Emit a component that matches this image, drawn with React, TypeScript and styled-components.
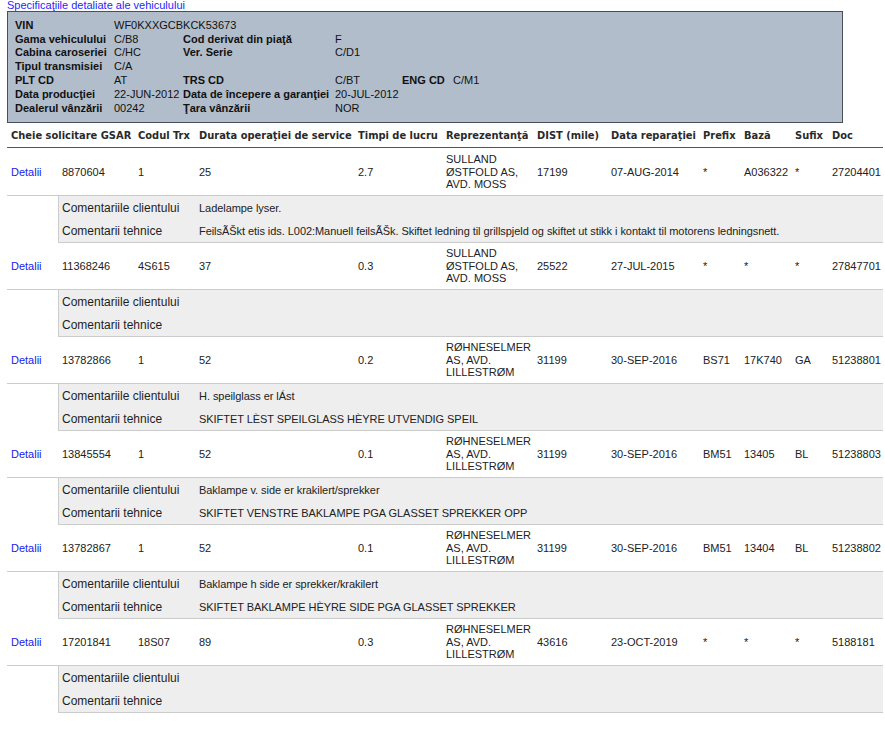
import styled, { createGlobalStyle } from 'styled-components';

const GlobalStyle = createGlobalStyle`
  body {
    margin: 0;
    background: #ffffff;
    font-family: "Liberation Sans", Arial, sans-serif;
    font-size: 11px;
    color: #222222;
  }
`;

type Record = {
  key: string;
  trx: string;
  duration: string;
  time: string;
  dealer: string;
  dist: string;
  date: string;
  prefix: string;
  base: string;
  suffix: string;
  doc: string;
  customer: string;
  tech: string;
};

const specRows: string[][] = [
  ['VIN', 'WF0KXXGCBKCK53673'],
  ['Gama vehiculului', 'C/B8', 'Cod derivat din piaţă', 'F'],
  ['Cabina caroseriei', 'C/HC', 'Ver. Serie', 'C/D1'],
  ['Tipul transmisiei', 'C/A'],
  ['PLT CD', 'AT', 'TRS CD', 'C/BT', 'ENG CD', 'C/M1'],
  ['Data producţiei', '22-JUN-2012', 'Data de începere a garanţiei', '20-JUL-2012'],
  ['Dealerul vânzării', '00242', 'Ţara vânzării', 'NOR'],
];

const headers = [
  'Codul Trx',
  'Durata operaţiei de service',
  'Timpi de lucru',
  'Reprezentanţă',
  'DIST (mile)',
  'Data reparaţiei',
  'Prefix',
  'Bază',
  'Sufix',
  'Doc',
];

const sulland = 'SULLAND ØSTFOLD AS, AVD. MOSS';
const rohne = 'RØHNESELMER AS, AVD. LILLESTRØM';

const records: Record[] = [
  {
    key: '8870604', trx: '1', duration: '25', time: '2.7', dealer: sulland, dist: '17199',
    date: '07-AUG-2014', prefix: '*', base: 'A036322', suffix: '*', doc: '27204401',
    customer: 'Ladelampe lyser.',
    tech: 'FeilsÃŠkt etis ids. L002:Manuell feilsÃŠk. Skiftet ledning til grillspjeld og skiftet ut stikk i kontakt til motorens ledningsnett.',
  },
  {
    key: '11368246', trx: '4S615', duration: '37', time: '0.3', dealer: sulland, dist: '25522',
    date: '27-JUL-2015', prefix: '*', base: '*', suffix: '*', doc: '27847701',
    customer: '', tech: '',
  },
  {
    key: '13782866', trx: '1', duration: '52', time: '0.2', dealer: rohne, dist: '31199',
    date: '30-SEP-2016', prefix: 'BS71', base: '17K740', suffix: 'GA', doc: '51238801',
    customer: 'H. speilglass er lÁst',
    tech: 'SKIFTET LÈST SPEILGLASS HÈYRE UTVENDIG SPEIL',
  },
  {
    key: '13845554', trx: '1', duration: '52', time: '0.1', dealer: rohne, dist: '31199',
    date: '30-SEP-2016', prefix: 'BM51', base: '13405', suffix: 'BL', doc: '51238803',
    customer: 'Baklampe v. side er krakilert/sprekker',
    tech: 'SKIFTET VENSTRE BAKLAMPE PGA GLASSET SPREKKER OPP',
  },
  {
    key: '13782867', trx: '1', duration: '52', time: '0.1', dealer: rohne, dist: '31199',
    date: '30-SEP-2016', prefix: 'BM51', base: '13404', suffix: 'BL', doc: '51238802',
    customer: 'Baklampe h side er sprekker/krakilert',
    tech: 'SKIFTET BAKLAMPE HÈYRE SIDE PGA GLASSET SPREKKER',
  },
  {
    key: '17201841', trx: '18S07', duration: '89', time: '0.3', dealer: rohne, dist: '43616',
    date: '23-OCT-2019', prefix: '*', base: '*', suffix: '*', doc: '5188181',
    customer: '', tech: '',
  },
];

// column widths of the history table
const COLUMNS = '51px 76px 61px 159px 88px 91px 74px 92px 41px 51px 37px 55px';

export default function App() {
  return (
    <>
      <GlobalStyle />
      <Page>
        <Title>Specificaţiile detaliate ale vehiculului</Title>
        <SpecBox>
          <SpecGrid>
            {specRows.map((row, r) =>
              [0, 1, 2, 3, 4, 5].map((c) => (
                <SpecCell key={`${r}-${c}`} $label={c % 2 === 0}>
                  {row[c] ?? ''}
                </SpecCell>
              ))
            )}
          </SpecGrid>
        </SpecBox>

        <HeaderRow>
          <HeadCell $span={2}>Cheie solicitare GSAR</HeadCell>
          {headers.map((h) => (
            <HeadCell key={h}>{h}</HeadCell>
          ))}
        </HeaderRow>

        {records.map((rec) => (
          <div key={rec.key}>
            <DataRow>
              <Cell>
                <DetailLink href="#">Detalii</DetailLink>
              </Cell>
              <Cell>{rec.key}</Cell>
              <Cell>{rec.trx}</Cell>
              <Cell>{rec.duration}</Cell>
              <Cell>{rec.time}</Cell>
              <DealerCell>{rec.dealer}</DealerCell>
              <Cell>{rec.dist}</Cell>
              <Cell>{rec.date}</Cell>
              <Cell>{rec.prefix}</Cell>
              <Cell>{rec.base}</Cell>
              <Cell>{rec.suffix}</Cell>
              <Cell>{rec.doc}</Cell>
            </DataRow>
            <CommentBlock>
              <CommentLine>
                <CommentLabel>Comentariile clientului</CommentLabel>
                <CommentText>{rec.customer}</CommentText>
              </CommentLine>
              <CommentLine>
                <CommentLabel>Comentarii tehnice</CommentLabel>
                <CommentText>{rec.tech}</CommentText>
              </CommentLine>
            </CommentBlock>
          </div>
        ))}
      </Page>
    </>
  );
}

const Page = styled.div`
  padding: 0 2px 0 7px;
`;

const Title = styled.div`
  color: #1f1fff;
  font-size: 11px;
  line-height: 11px;
  height: 11px;
`;

// VEHICLE SPEC BOX
const SpecBox = styled.div`
  box-sizing: border-box;
  width: 836px;
  height: 112px;
  padding: 6px 7px;
  background: #b1bdcb;
  border: 1px solid #474f58;
`;

const SpecGrid = styled.div`
  display: grid;
  grid-template-columns: 99px 69px 152px 67px 51px 1fr;
  grid-auto-rows: 13.8px;
  align-items: center;
`;

const SpecCell = styled.div<{ $label: boolean }>`
  font-weight: ${(p) => (p.$label ? 'bold' : 'normal')};
  color: #111111;
  white-space: nowrap;
`;

// HISTORY TABLE
const HeaderRow = styled.div`
  display: grid;
  grid-template-columns: ${COLUMNS};
  align-items: center;
  height: 24px;
  margin-bottom: 1px;
  border-bottom: 1px solid #3d5878;
`;

const HeadCell = styled.div<{ $span?: number }>`
  grid-column: span ${(p) => p.$span ?? 1};
  padding-left: 4px;
  font-family: "DejaVu Sans Condensed", "DejaVu Sans", sans-serif;
  font-stretch: condensed;
  font-weight: bold;
  font-size: 11px;
  color: #2a2a2a;
  white-space: nowrap;
`;

const DataRow = styled.div`
  display: grid;
  grid-template-columns: ${COLUMNS};
  align-items: center;
  box-sizing: border-box;
  height: 47px;
  border-bottom: 1px solid #cccccc;
`;

const Cell = styled.div`
  padding-left: 4px;
  white-space: nowrap;
`;

const DealerCell = styled.div`
  padding: 0 2px 0 4px;
  line-height: 12.5px;
`;

const DetailLink = styled.a`
  color: #1a1aee;
  text-decoration: none;
`;

const CommentBlock = styled.div`
  box-sizing: border-box;
  height: 47px;
  margin-left: 51px;
  background: #eeeeee;
  border-left: 1px solid #cccccc;
  border-bottom: 1px solid #cccccc;
`;

const CommentLine = styled.div`
  display: grid;
  grid-template-columns: 140px 1fr;
  align-items: center;
  height: 23px;
`;

const CommentLabel = styled.div`
  padding-left: 3px;
  font-size: 12px;
  color: #1e1e1e;
  white-space: nowrap;
`;

const CommentText = styled.div`
  font-size: 11px;
  letter-spacing: -0.005em;
  color: #222222;
  white-space: nowrap;
`;
